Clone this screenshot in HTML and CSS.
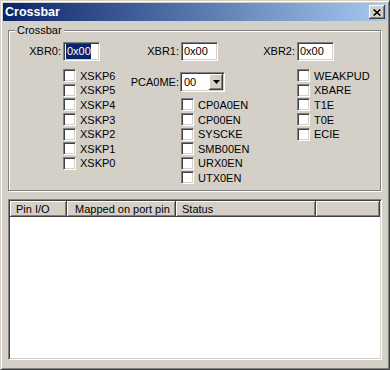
FILE: index.html
```html
<!DOCTYPE html>
<html lang="en">
<head>
    <meta charset="UTF-8">
    <title>Crossbar</title>
    <link rel="stylesheet" href="styles.css">
</head>
<body>
    <div class="window">
        <div class="titlebar">
            <span>Crossbar</span>
            <div class="close-btn">
                <svg width="8" height="7" viewBox="0 0 8 7"><path d="M0.6 0.5 L7.4 6.5 M7.4 0.5 L0.6 6.5" stroke="#000" stroke-width="1.6" fill="none"/></svg>
            </div>
        </div>

        <fieldset class="group">
            <legend>Crossbar</legend>
            <div class="regs">
                <div class="lbl">XBR0:</div>
                <div class="field"><span class="sel">0x00</span></div>
                <div class="lbl">XBR1:</div>
                <div class="field">0x00</div>
                <div class="lbl">XBR2:</div>
                <div class="field">0x00</div>

                <div class="checks checks-a">
                    <div class="check"><span class="box"></span>XSKP6</div>
                    <div class="check"><span class="box"></span>XSKP5</div>
                    <div class="check"><span class="box"></span>XSKP4</div>
                    <div class="check"><span class="box"></span>XSKP3</div>
                    <div class="check"><span class="box"></span>XSKP2</div>
                    <div class="check"><span class="box"></span>XSKP1</div>
                    <div class="check"><span class="box"></span>XSKP0</div>
                </div>

                <div class="lbl lbl-pca">PCA0ME:</div>
                <div class="combo">
                    <span class="combo-text">00</span>
                    <span class="drop">
                        <svg width="7" height="4" viewBox="0 0 7 4"><polygon points="0,0 7,0 3.5,4" fill="#000"/></svg>
                    </span>
                </div>

                <div class="checks checks-b">
                    <div class="check"><span class="box"></span>CP0A0EN</div>
                    <div class="check"><span class="box"></span>CP00EN</div>
                    <div class="check"><span class="box"></span>SYSCKE</div>
                    <div class="check"><span class="box"></span>SMB00EN</div>
                    <div class="check"><span class="box"></span>URX0EN</div>
                    <div class="check"><span class="box"></span>UTX0EN</div>
                </div>

                <div class="checks checks-c">
                    <div class="check"><span class="box"></span>WEAKPUD</div>
                    <div class="check"><span class="box"></span>XBARE</div>
                    <div class="check"><span class="box"></span>T1E</div>
                    <div class="check"><span class="box"></span>T0E</div>
                    <div class="check"><span class="box"></span>ECIE</div>
                </div>
            </div>
        </fieldset>

        <div class="list">
            <div class="list-head">
                <div class="col col-pin">Pin I/O</div>
                <div class="col col-mapped">Mapped on port pin</div>
                <div class="col col-status">Status</div>
                <div class="col col-rest"></div>
            </div>
        </div>
    </div>
</body>
</html>
```

FILE: styles.css
```css
body {
    margin: 0;
    font-family: "Liberation Sans", Arial, sans-serif;
    font-size: 11px;
    color: #000;
    background: #d4d0c8;
}
.window {
    box-sizing: border-box;
    width: 390px;
    height: 370px;
    display: flex;
    flex-direction: column;
    padding: 2px;
    background: #d4d0c8;
    border: 1px solid;
    border-color: #d4d0c8 #404040 #404040 #d4d0c8;
    box-shadow: inset 1px 1px #fff, inset -1px -1px #808080;
}
.titlebar {
    height: 18px;
    flex-shrink: 0;
    display: flex;
    align-items: center;
    justify-content: space-between;
    padding-left: 2px;
    background: linear-gradient(to right, #0a246a, #a6caf0);
    color: #fff;
    font-weight: bold;
    font-size: 12.5px;
}
.close-btn {
    width: 16px;
    height: 14px;
    margin-right: 2px;
    display: flex;
    align-items: center;
    justify-content: center;
    background: #d4d0c8;
    box-shadow: inset -1px -1px #404040, inset 1px 1px #fff, inset -2px -2px #808080;
}

/* group box */
.group {
    box-sizing: border-box;
    height: 167px;
    min-width: 0;
    flex-shrink: 0;
    margin: 3px 6px 0 5px;
    padding: 0;
    border: 1px solid #808080;
    box-shadow: inset 1px 1px #fff, 1px 1px #fff;
}
.group legend {
    margin-left: 6px;
    padding: 0 2px;
    line-height: 13px;
    background: #d4d0c8;
}
.regs {
    display: grid;
    grid-template-columns: 54px 37px 81px 75px 41px 1fr;
    grid-template-rows: 26.5px 29.2px auto;
    padding-top: 5px;
}
.lbl {
    text-align: right;
    padding-right: 2px;
    line-height: 19px;
    white-space: nowrap;
}
.field {
    box-sizing: border-box;
    width: 37px;
    height: 19px;
    padding: 1px;
    background: #fff;
    border: 1px solid;
    border-color: #808080 #fff #fff #808080;
    box-shadow: inset 1px 1px #404040, inset -1px -1px #d4d0c8;
    line-height: 15px;
    white-space: nowrap;
}
.field .sel {
    display: inline-block;
    background: #0a246a;
    color: #fff;
    padding-left: 1px;
}
.field:not(:first-child) {
    padding-left: 2px;
}

.lbl-pca {
    grid-column: 3;
    grid-row: 2;
    margin-top: 3.5px;
    line-height: 20px;
}
.combo {
    grid-column: 4;
    grid-row: 2;
    box-sizing: border-box;
    width: 45px;
    height: 20px;
    margin-top: 3.5px;
    margin-left: -1px;
    display: flex;
    padding: 1px;
    background: #fff;
    border: 1px solid;
    border-color: #808080 #fff #fff #808080;
    box-shadow: inset 1px 1px #404040, inset -1px -1px #d4d0c8;
}
.combo-text {
    flex: 1;
    padding-left: 2px;
    line-height: 16px;
}
.drop {
    width: 14px;
    height: 16px;
    display: flex;
    align-items: center;
    justify-content: center;
    background: #d4d0c8;
    box-shadow: inset -1px -1px #404040, inset 1px 1px #fff, inset -2px -2px #808080;
}

.checks {
    display: flex;
    flex-direction: column;
}
.checks-a {
    grid-column: 2;
    grid-row: 2 / span 2;
}
.checks-b {
    grid-column: 4;
    grid-row: 3;
}
.checks-c {
    grid-column: 6;
    grid-row: 2 / span 2;
}
.check {
    height: 14.6px;
    display: flex;
    align-items: center;
    gap: 4px;
    white-space: nowrap;
}
.box {
    box-sizing: border-box;
    width: 13px;
    height: 13px;
    flex-shrink: 0;
    background: #fff;
    border: 1px solid;
    border-color: #808080 #fff #fff #808080;
    box-shadow: inset 1px 1px #404040, inset -1px -1px #d4d0c8;
}

/* list view */
.list {
    flex: 1;
    margin: 8px 5px 7px 5px;
    padding: 1px;
    background: #fff;
    border: 1px solid;
    border-color: #808080 #fff #fff #808080;
    box-shadow: inset 1px 1px #404040, inset -1px -1px #d4d0c8;
}
.list-head {
    display: flex;
    height: 16px;
}
.col {
    box-sizing: border-box;
    padding-left: 6px;
    line-height: 16px;
    white-space: nowrap;
    background: #d4d0c8;
    box-shadow: inset -1px -1px #404040, inset 1px 1px #fff, inset -2px -2px #808080;
}
.col-pin {
    width: 57px;
}
.col-mapped {
    width: 109px;
    padding-left: 8px;
}
.col-status {
    width: 140px;
}
.col-rest {
    flex: 1;
}
```
